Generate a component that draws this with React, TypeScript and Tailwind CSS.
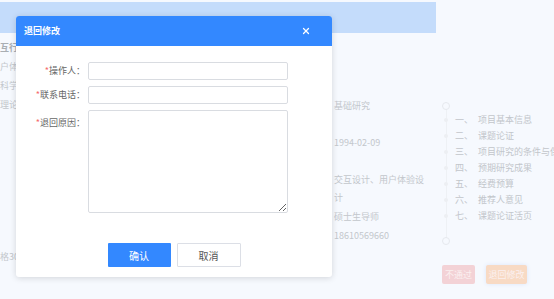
import { X } from "lucide-react";

const font = { fontFamily: '"Noto Sans CJK SC", "Noto Sans", sans-serif' };

const leftLines = ["互行", "户体", "科学", "理论"];

const steps = [
  ["一、", "项目基本信息"],
  ["二、", "课题论证"],
  ["三、", "项目研究的条件与保障"],
  ["四、", "预期研究成果"],
  ["五、", "经费预算"],
  ["六、", "推荐人意见"],
  ["七、", "课题论证活页"],
];

const FormLabel = ({ text, top = false }: { text: string; top?: boolean }) => (
  <span className={top ? "w-[69px] shrink-0 pt-[6px] text-right text-[9px] text-[#666]" : "w-[69px] shrink-0 text-right text-[9px] text-[#666]"}>
    <span className="text-[#f56c6c]">*</span>
    {text}：
  </span>
);

export default function App() {
  return (
    <div className="relative h-[299px] w-[554px] overflow-hidden bg-[#f6f9fe]" style={font}>
      {/* page behind the overlay */}
      <div className="mt-[2px] h-[31px] w-[436px] bg-[#c4dcfb]" />
      <div className="flex">
        <div className="w-[334px] shrink-0 pt-[5px] text-[9px] text-[#c3c7cc]">
          {leftLines.map((t, i) => (
            <div key={t} className={i === 0 ? "h-[19px] font-bold leading-[19px] text-[#a9aeb3]" : "h-[19px] leading-[19px]"}>
              {t}
            </div>
          ))}
          <div className="mt-[133px] h-[19px] leading-[19px]">格30</div>
        </div>
        <div className="w-[94px] shrink-0 pt-[63px] text-[9px] text-[#c3c7cc]">
          <div className="h-[19px] leading-[19px]">基础研究</div>
          <div className="mt-[18px] h-[19px] leading-[19px]">1994-02-09</div>
          <div className="mt-[19px] leading-[18px]">交互设计、用户体验设计</div>
          <div className="h-[19px] leading-[19px]">硕士生导师</div>
          <div className="h-[19px] leading-[19px]">18610569660</div>
        </div>
        <div className="ml-[14px] flex flex-col pt-[69px]">
          <div className="relative flex flex-col">
            <div className="absolute left-[3.5px] top-[4px] h-[132px] w-px bg-[#eef1f5]" />
            <div className="relative h-[8px] w-[8px] rounded-full border border-[#e6e9ee] bg-[#f6f9fe]" />
            <div className="pt-[2px]">
              {steps.map(([n, t]) => (
                <div key={n} className="relative flex h-[16px] items-center whitespace-nowrap text-[9px] text-[#c2c6cb]">
                  <span className="ml-[2px] h-[4px] w-[4px] rounded-full bg-[#eceff3]" />
                  <span className="ml-[7px] w-[23px]">{n}</span>
                  <span>{t}</span>
                </div>
              ))}
            </div>
            <div className="relative mt-[13px] h-[8px] w-[8px] rounded-full border border-[#e6e9ee] bg-[#f6f9fe]" />
          </div>
          <div className="mt-[20px] flex gap-[11px] text-[9px] text-[#fbf0f0]">
            <span className="flex h-[19px] w-[33px] items-center justify-center rounded-[2px] bg-[#f3d2d6]">不通过</span>
            <span className="flex h-[19px] w-[41px] items-center justify-center rounded-[2px] bg-[#f8dac4] shadow-[0_0_4px_#dbe7fb]">退回修改</span>
          </div>
        </div>
      </div>

      {/* dialog */}
      <div className="absolute left-[16px] top-[16px] w-[316px] overflow-hidden rounded-[3px] bg-white shadow-[0_1px_6px_rgba(0,0,0,0.15)]">
        <div className="flex h-[30px] items-center justify-between bg-[#3388ff] pl-[8px] pr-[21px]">
          <span className="text-[9px] font-bold text-white">退回修改</span>
          <X size={10} strokeWidth={3} className="text-white" />
        </div>
        <div className="flex flex-col gap-[6px] pt-[16px]">
          <div className="flex items-center gap-[3px]">
            <FormLabel text="操作人" />
            <input className="h-[18px] w-[200px] rounded-[2px] border border-[#d9dce1] outline-none" />
          </div>
          <div className="flex items-center gap-[3px]">
            <FormLabel text="联系电话" />
            <input className="h-[18px] w-[200px] rounded-[2px] border border-[#d9dce1] outline-none" />
          </div>
          <div className="flex items-start gap-[3px]">
            <FormLabel text="退回原因" top />
            <textarea className="block h-[103px] w-[200px] resize-y rounded-[2px] border border-[#d9dce1] outline-none" />
          </div>
        </div>
        <div className="flex justify-center gap-[6px] pb-[10px] pt-[30px] text-[10px]">
          <button className="h-[24px] w-[63px] rounded-[1px] bg-[#3388ff] text-white">确认</button>
          <button className="h-[24px] w-[64px] rounded-[1px] border border-[#dcdfe6] bg-white text-[#555]">取消</button>
        </div>
      </div>
    </div>
  );
}
